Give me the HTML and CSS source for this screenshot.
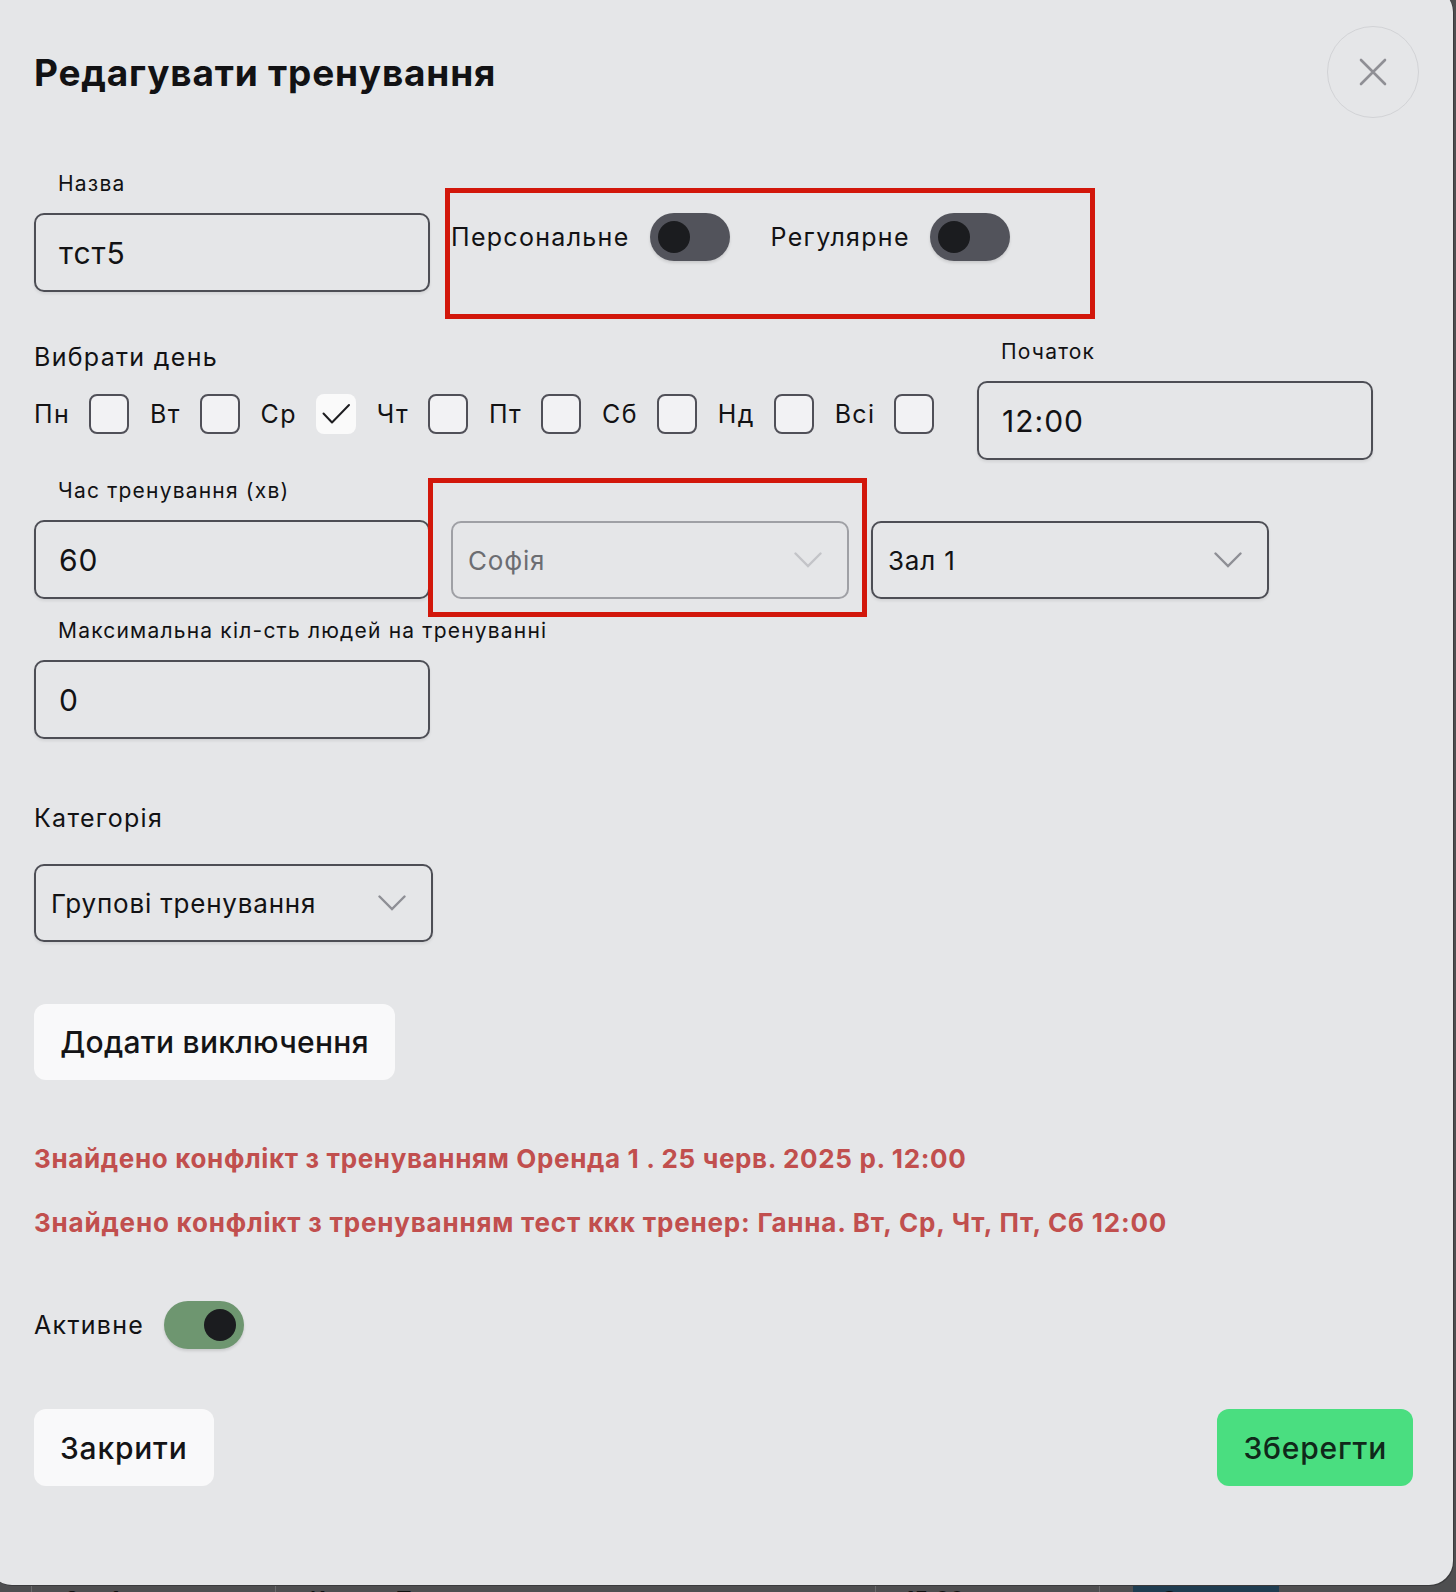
FILE: index.html
```html
<!DOCTYPE html>
<html lang="uk">
<head>
<meta charset="utf-8">
<title>Редагувати тренування</title>
<link rel="stylesheet" href="styles.css">
</head>
<body>
<div class="modal">
  <div class="header">
    <h1 class="title">Редагувати тренування</h1>
    <button class="close" type="button" aria-label="Закрити">
      <svg width="28" height="28" viewBox="0 0 28 28"><path d="M2 2L26 26M26 2L2 26" stroke="#8f8f95" stroke-width="2.6" stroke-linecap="round" fill="none"/></svg>
    </button>
  </div>

  <div class="row row-name">
    <div class="field">
      <div class="label">Назва</div>
      <div class="input">тст5</div>
    </div>
    <div class="switches">
      <span class="switch-label">Персональне</span>
      <span class="toggle"><span class="knob"></span></span>
      <span class="switch-label second">Регулярне</span>
      <span class="toggle"><span class="knob"></span></span>
    </div>
  </div>

  <div class="row row-days">
    <div class="days-col">
      <div class="section-label">Вибрати день</div>
      <div class="days">
        <div class="day"><span>Пн</span><span class="cb"></span></div>
        <div class="day"><span>Вт</span><span class="cb"></span></div>
        <div class="day"><span>Ср</span><span class="cb checked"><svg width="40" height="40" viewBox="0 0 40 40"><path d="M7.5 19.5L16 28.5L33 11" stroke="#1d1d20" stroke-width="2" fill="none" stroke-linecap="round" stroke-linejoin="round"/></svg></span></div>
        <div class="day"><span>Чт</span><span class="cb"></span></div>
        <div class="day"><span>Пт</span><span class="cb"></span></div>
        <div class="day"><span>Сб</span><span class="cb"></span></div>
        <div class="day"><span>Нд</span><span class="cb"></span></div>
        <div class="day"><span>Всі</span><span class="cb"></span></div>
      </div>
    </div>
    <div class="field">
      <div class="label">Початок</div>
      <div class="input">12:00</div>
    </div>
  </div>

  <div class="row row-time">
    <div class="field">
      <div class="label">Час тренування (хв)</div>
      <div class="input">60</div>
    </div>
    <div class="select disabled"><span>Софія</span><svg class="chev" width="28" height="16" viewBox="0 0 28 16"><path d="M1.5 1.5L14 14L26.5 1.5" stroke="#c3c4c8" stroke-width="2.4" fill="none" stroke-linecap="round"/></svg></div>
    <div class="select"><span>Зал 1</span><svg class="chev" width="28" height="16" viewBox="0 0 28 16"><path d="M1.5 1.5L14 14L26.5 1.5" stroke="#8e8f95" stroke-width="2.4" fill="none" stroke-linecap="round"/></svg></div>
  </div>

  <div class="row row-max">
    <div class="field">
      <div class="label">Максимальна кіл-сть людей на тренуванні</div>
      <div class="input">0</div>
    </div>
  </div>

  <div class="section-label category-label">Категорія</div>
  <div class="select category"><span>Групові тренування</span><svg class="chev" width="28" height="16" viewBox="0 0 28 16"><path d="M1.5 1.5L14 14L26.5 1.5" stroke="#8e8f95" stroke-width="2.4" fill="none" stroke-linecap="round"/></svg></div>

  <button class="btn btn-light add-btn" type="button">Додати виключення</button>

  <div class="conflicts">
    <p class="conflict">Знайдено конфлікт з тренуванням Оренда 1 . 25 черв. 2025 р. 12:00</p>
    <p class="conflict">Знайдено конфлікт з тренуванням тест ккк тренер: Ганна. Вт, Ср, Чт, Пт, Сб 12:00</p>
  </div>

  <div class="active-row">
    <span class="switch-label">Активне</span>
    <span class="toggle on"><span class="knob"></span></span>
  </div>

  <div class="footer">
    <button class="btn btn-light" type="button">Закрити</button>
    <button class="btn btn-green" type="button">Зберегти</button>
  </div>

  <div class="mark mark-1"></div>
  <div class="mark mark-2"></div>
</div>

<div class="backdrop-row">
  <div class="bcell c0"></div>
  <div class="bcell c1">Зал 1</div>
  <div class="bcell c2">Кашон, Пт</div>
  <div class="bcell c3">15:00</div>
  <div class="bcell c4"><span class="blue">Оплачено</span></div>
</div>
</body>
</html>
```

FILE: styles.css
```css
* { box-sizing: border-box; }
html, body {
  margin: 0;
  padding: 0;
  height: 1592px;
  overflow: hidden;
}
body {
  background: #4e4e50;
  font-family: Inter, "Noto Sans", "Liberation Sans", sans-serif;
  color: #121214;
}

.modal {
  position: relative;
  width: 1465px;
  height: 1597px;
  margin: -12px 0 0 -12px;
  padding: 38px 34px 0 46px;
  background: #e5e6e8;
  border-radius: 24px;
  box-shadow: 1px 1px 0 #3a3a3c;
}

.header {
  display: flex;
  justify-content: space-between;
  align-items: center;
  height: 92px;
}
.title {
  margin: 0;
  font-size: 37px;
  font-weight: 700;
  letter-spacing: 0.8px;
}
.close {
  width: 92px;
  height: 92px;
  border-radius: 50%;
  border: 1.5px solid #d2d3d6;
  background: transparent;
  display: flex;
  align-items: center;
  justify-content: center;
  padding: 0;
}

.row { display: flex; }

.field { display: flex; flex-direction: column; }
.label {
  font-size: 21px;
  line-height: 24px;
  padding-left: 24px;
  margin-bottom: 17px;
  font-weight: 400;
  letter-spacing: 1.2px;
  white-space: nowrap;
}
.input {
  width: 396px;
  height: 79px;
  border: 2px solid #4d4e55;
  border-radius: 10px;
  padding-left: 23px;
  display: flex;
  align-items: center;
  font-size: 30px;
  letter-spacing: 1px;
  box-shadow: 0 2px 3px rgba(0,0,0,0.08);
}

.row-name { margin-top: 54px; }
.switches {
  display: flex;
  align-items: center;
  height: 48px;
  margin-top: 41px;
  margin-left: 21px;
}
.switch-label { font-size: 25px; letter-spacing: 1.3px; margin-right: 20px; }
.switch-label.second { margin-left: 41px; }

.toggle {
  width: 80px;
  height: 48px;
  border-radius: 24px;
  background: #52535b;
  display: flex;
  align-items: center;
  padding: 0 8px;
  box-shadow: 0 2px 3px rgba(0,0,0,0.12);
}
.knob {
  width: 32px;
  height: 32px;
  border-radius: 50%;
  background: #1b1c1f;
}
.toggle.on { background: #6e9670; justify-content: flex-end; }

.row-days { margin-top: 48px; }
.days-col { width: 943px; flex: none; padding-top: 3px; }
.section-label { font-size: 25px; line-height: 29px; letter-spacing: 1.3px; }
.days {
  display: flex;
  align-items: center;
  gap: 21px;
  margin-top: 22px;
  font-size: 25px;
  letter-spacing: 1.3px;
}
.day { display: flex; align-items: center; gap: 19px; }
.cb {
  width: 40px;
  height: 40px;
  border: 2px solid #505058;
  border-radius: 8px;
  background: #f2f2f4;
  display: block;
}
.cb.checked {
  border: none;
  background: #fafafa;
}
.cb.checked svg { display: block; }

.row-time { margin-top: 19px; align-items: flex-end; }
.select {
  width: 398px;
  height: 78px;
  border: 2px solid #4d4e55;
  border-radius: 10px;
  display: flex;
  align-items: center;
  justify-content: space-between;
  padding: 0 25px 0 15px;
  font-size: 26px;
  letter-spacing: 0.8px;
  box-shadow: 0 2px 3px rgba(0,0,0,0.08);
}
.select.disabled {
  border-color: #9fa0a5;
  color: #6c6d72;
  margin-left: 21px;
  box-shadow: none;
}
.row-time .select + .select { margin-left: 22px; }
.chev { display: block; }

.row-max { margin-top: 20px; }

.category-label { margin-top: 65px; }
.select.category { margin-top: 31px; width: 399px; }

.btn {
  border: none;
  border-radius: 12px;
  height: 77px;
  padding: 0 26px;
  font-family: inherit;
  font-size: 30px;
  font-weight: 500;
  letter-spacing: 0.8px;
  color: #141416;
  cursor: pointer;
}
.btn-light { background: #f9f9fa; }
.btn-green { background: #4ade80; color: #10281a; }
.add-btn { display: block; margin-top: 62px; height: 76px; width: 361px; padding: 0; letter-spacing: 0.3px; }

.conflicts { margin-top: 63px; }
.conflict {
  margin: 0 0 32px 0;
  font-size: 26px;
  line-height: 32px;
  font-weight: 700;
  letter-spacing: 0.65px;
  color: #c14f4e;
}
.conflict:last-child { margin-bottom: 0; letter-spacing: 0.8px; }

.active-row {
  display: flex;
  align-items: center;
  margin-top: 62px;
}
.active-row .switch-label { margin-right: 20px; }

.footer {
  display: flex;
  justify-content: space-between;
  margin-top: 60px;
  margin-right: 6px;
}

.mark {
  position: absolute;
  border: 5px solid #d2170b;
  pointer-events: none;
}
.mark-1 { left: 457px; top: 200px; width: 650px; height: 131px; }
.mark-2 { left: 440px; top: 490px; width: 439px; height: 139px; }

.backdrop-row {
  display: flex;
  height: 40px;
  margin-top: -4px;
  font-size: 22px;
  font-weight: 600;
  color: #111;
}
.bcell {
  height: 40px;
  border-right: 1px solid #6a6a6c;
  padding-top: 5px;
}
.c0 { width: 32px; }
.c1 { width: 244px; padding-left: 33px; }
.c2 { width: 600px; padding-left: 34px; }
.c3 { width: 224px; padding-left: 29px; }
.c4 { width: 356px; padding-left: 33px; border: none; }
.blue { display: inline-block; width: 146px; height: 40px; background: #1f3d51; margin-top: -5px; padding: 5px 0 0 28px; color: #111; }
```
